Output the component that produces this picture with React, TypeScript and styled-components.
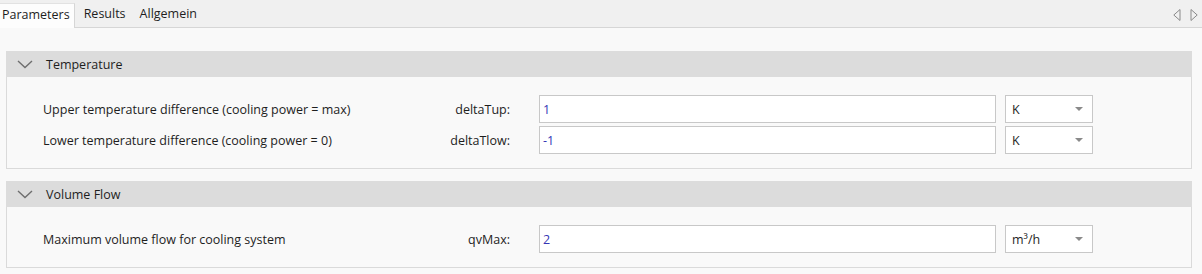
import React from "react";
import styled, { createGlobalStyle } from "styled-components";

const Global = createGlobalStyle`
  html, body { margin: 0; padding: 0; background: #f9f9f9; }
  body { font-family: "Open Sans", "Noto Sans", sans-serif; font-size: 12px; color: #1e1e1e; }
  * { box-sizing: border-box; }
`;

const Page = styled.div`
  width: 1202px;
  height: 274px;
  background: #f9f9f9;
  overflow: hidden;
`;

const TabBar = styled.div`
  height: 28px;
  background: #f0f0f0;
  border-bottom: 1px solid #d6d6d6;
  display: flex;
  align-items: flex-end;
  position: relative;
`;

const Tab = styled.div<{ $active?: boolean }>`
  height: ${(p) => (p.$active ? "25px" : "24px")};
  padding-left: ${(p) => (p.$active ? "2px" : "7px")};
  padding-right: ${(p) => (p.$active ? "4px" : "7px")};
  padding-bottom: 1px;
  display: flex;
  align-items: center;
  background: ${(p) => (p.$active ? "#fdfdfd" : "transparent")};
  border-right: ${(p) => (p.$active ? "1px solid #d6d6d6" : "none")};
  border-top: ${(p) => (p.$active ? "1px solid #e2e2e2" : "none")};
  margin-bottom: ${(p) => (p.$active ? "-1px" : "0")};
  margin-right: ${(p) => (p.$active ? "2px" : "0")};
  font-size: 12.5px;
  color: #1e1e1e;
  line-height: 1;
`;

const NavArrows = styled.div`
  position: absolute;
  right: 4px;
  top: 9px;
  display: flex;
  gap: 9px;
`;

const Sections = styled.div`
  padding: 23px 10px 0 6px;
  display: flex;
  flex-direction: column;
  gap: 12px;
`;

const Section = styled.div`
  border: 1px solid #dadada;
  border-top: none;
  background: #f9f9f9;
`;

const Header = styled.div`
  height: 26px;
  background: #dcdcdc;
  display: flex;
  align-items: center;
  padding-left: 11px;
  gap: 13px;
  margin: 0 -1px;
  font-size: 12.5px;
  color: #1e1e1e;
`;

const Body = styled.div`
  padding: 18px 98px 14px 36px;
  display: grid;
  grid-template-columns: 1fr auto 457px 97px;
  row-gap: 3px;
  align-items: center;
`;

const Label = styled.div`
  font-size: 12.5px;
  color: #1e1e1e;
`;

const ParamLabel = styled.div`
  text-align: right;
  padding-right: 29px;
  font-size: 12.5px;
  color: #1e1e1e;
`;

const Input = styled.div`
  height: 28px;
  border: 1px solid #c8c8c8;
  background: #ffffff;
  display: flex;
  align-items: center;
  padding-left: 3px;
  font-size: 12.5px;
  color: #3535b5;
`;

const Select = styled.div`
  margin-left: 9px;
  height: 28px;
  border: 1px solid #c8c8c8;
  background: #ffffff;
  display: flex;
  align-items: center;
  justify-content: space-between;
  padding: 0 9px 0 6px;
  font-size: 12.5px;
  color: #1e1e1e;
`;

const Chevron = () => (
  <svg width="16" height="9" viewBox="0 0 16 9">
    <polyline points="1,1 8,7.5 15,1" fill="none" stroke="#6e6e6e" strokeWidth="1.4" />
  </svg>
);

const DropArrow = () => (
  <svg width="8" height="4" viewBox="0 0 8 4">
    <polygon points="0,0 8,0 4,4" fill="#8a8a8a" />
  </svg>
);

const LeftArrow = () => (
  <svg width="8" height="12" viewBox="0 0 8 12">
    <polygon points="7,0.5 7,11.5 0.8,6" fill="none" stroke="#8a8a8a" strokeWidth="1" />
  </svg>
);

const RightArrow = () => (
  <svg width="8" height="12" viewBox="0 0 8 12">
    <polygon points="1,0.5 1,11.5 7.2,6" fill="none" stroke="#8a8a8a" strokeWidth="1" />
  </svg>
);

type Row = { label: string; param: string; value: string; unit: string };

const sections: { title: string; rows: Row[] }[] = [
  {
    title: "Temperature",
    rows: [
      { label: "Upper temperature difference (cooling power = max)", param: "deltaTup:", value: "1", unit: "K" },
      { label: "Lower temperature difference (cooling power = 0)", param: "deltaTlow:", value: "-1", unit: "K" },
    ],
  },
  {
    title: "Volume Flow",
    rows: [
      { label: "Maximum volume flow for cooling system", param: "qvMax:", value: "2", unit: "m³/h" },
    ],
  },
];

export default function App() {
  return (
    <Page>
      <Global />
      <TabBar>
        <Tab $active>Parameters</Tab>
        <Tab>Results</Tab>
        <Tab>Allgemein</Tab>
        <NavArrows>
          <LeftArrow />
          <RightArrow />
        </NavArrows>
      </TabBar>
      <Sections>
        {sections.map((s) => (
          <Section key={s.title}>
            <Header>
              <Chevron />
              <span>{s.title}</span>
            </Header>
            <Body>
              {s.rows.map((r) => (
                <React.Fragment key={r.param}>
                  <Label>{r.label}</Label>
                  <ParamLabel>{r.param}</ParamLabel>
                  <Input>{r.value}</Input>
                  <Select>
                    <span>{r.unit}</span>
                    <DropArrow />
                  </Select>
                </React.Fragment>
              ))}
            </Body>
          </Section>
        ))}
      </Sections>
    </Page>
  );
}
